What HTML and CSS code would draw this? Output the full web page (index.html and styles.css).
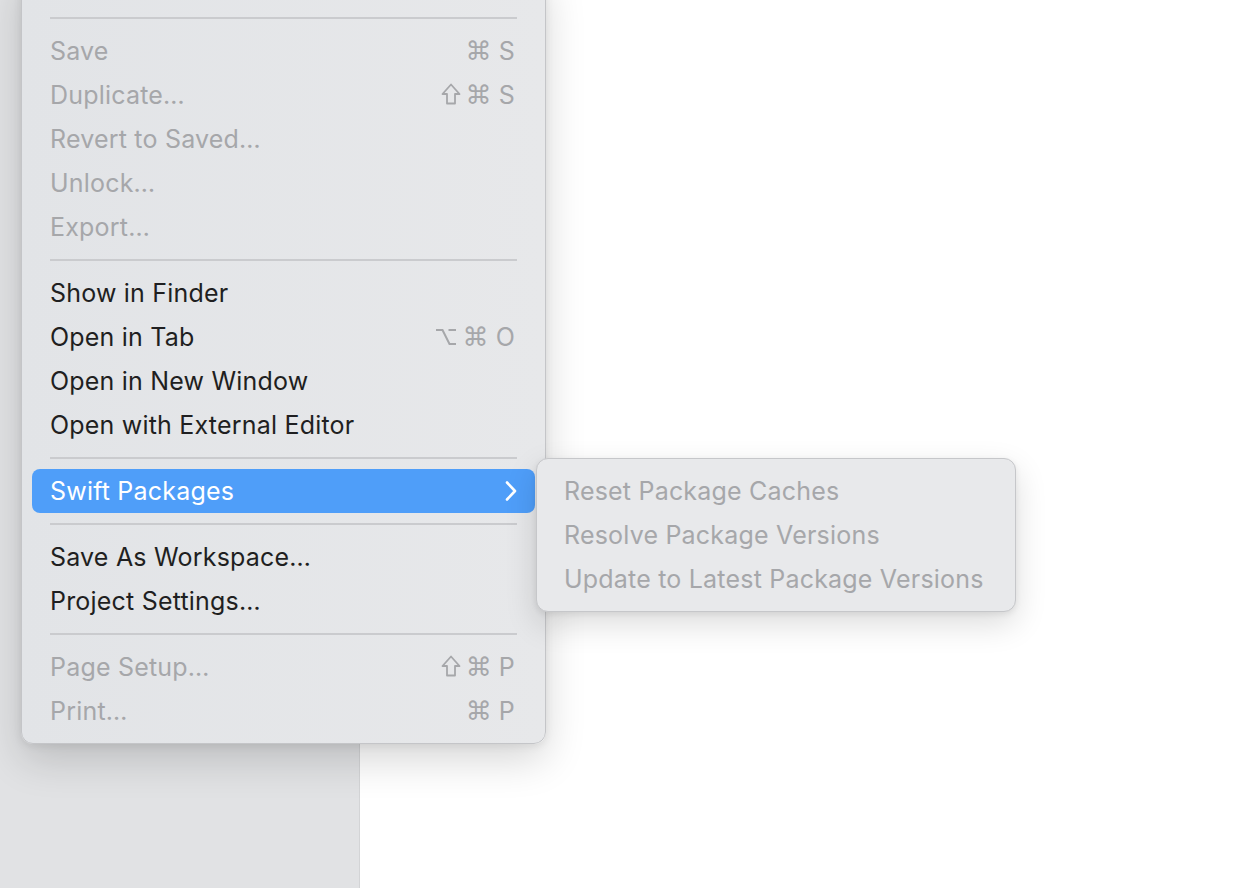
FILE: index.html
```html
<!DOCTYPE html>
<html lang="en">
<head>
    <meta charset="UTF-8">
    <title>File menu</title>
    <link rel="stylesheet" href="styles.css">
</head>
<body>
    <div class="window">
        <aside class="sidebar"></aside>
        <main class="editor"></main>
    </div>

    <div class="menu">
        <div class="sep"></div>
        <div class="item off"><span>Save</span><span class="keys"><i>⌘</i><b>S</b></span></div>
        <div class="item off"><span>Duplicate…</span>
            <span class="keys">
                <svg class="shift" width="20" height="22" viewBox="0 0 20 22"><path d="M10 1.5 L18.5 11 H14 V20.5 H6 V11 H1.5 Z" fill="none" stroke="#a6a7aa" stroke-width="1.8" stroke-linejoin="round"/></svg><i>⌘</i><b>S</b>
            </span>
        </div>
        <div class="item off"><span>Revert to Saved…</span></div>
        <div class="item off"><span>Unlock…</span></div>
        <div class="item off"><span>Export…</span></div>
        <div class="sep"></div>
        <div class="item"><span>Show in Finder</span></div>
        <div class="item"><span>Open in Tab</span>
            <span class="keys">
                <svg class="option" width="22" height="20" viewBox="0 0 22 20"><path d="M1 3 H7.5 L14.5 17 H21 M13.5 3 H21" fill="none" stroke="#a6a7aa" stroke-width="2"/></svg><i>⌘</i><b>O</b>
            </span>
        </div>
        <div class="item"><span>Open in New Window</span></div>
        <div class="item"><span>Open with External Editor</span></div>
        <div class="sep"></div>
        <div class="item active"><span>Swift Packages</span>
            <svg class="chevron" width="14" height="22" viewBox="0 0 14 22"><path d="M3 2.5 L11 11 L3 19.5" fill="none" stroke="#fff" stroke-width="2.6" stroke-linecap="round" stroke-linejoin="round"/></svg>
        </div>
        <div class="sep"></div>
        <div class="item"><span>Save As Workspace…</span></div>
        <div class="item"><span>Project Settings…</span></div>
        <div class="sep"></div>
        <div class="item off"><span>Page Setup…</span>
            <span class="keys">
                <svg class="shift" width="20" height="22" viewBox="0 0 20 22"><path d="M10 1.5 L18.5 11 H14 V20.5 H6 V11 H1.5 Z" fill="none" stroke="#a6a7aa" stroke-width="1.8" stroke-linejoin="round"/></svg><i>⌘</i><b>P</b>
            </span>
        </div>
        <div class="item off"><span>Print…</span><span class="keys"><i>⌘</i><b>P</b></span></div>
    </div>

    <div class="submenu">
        <div class="item off"><span>Reset Package Caches</span></div>
        <div class="item off"><span>Resolve Package Versions</span></div>
        <div class="item off"><span>Update to Latest Package Versions</span></div>
    </div>
</body>
</html>
```

FILE: styles.css
```css
body {
    margin: 0;
    padding: 0;
    font-family: Inter, 'Noto Sans', sans-serif;
    background: #fff;
    overflow: hidden;
}
.window {
    display: flex;
    height: 888px;
}
.sidebar {
    width: 359px;
    background: #e1e2e4;
    border-right: 1px solid #d3d4d6;
}
.editor {
    flex: 1;
    background: #fff;
}
.menu {
    position: absolute;
    left: 21px;
    top: -30px;
    width: 525px;
    padding: 36px 0 10px;
    background: linear-gradient(90deg, #e2e4e7, #e7e8ea);
    border: 1px solid #c4c5c8;
    border-radius: 12px;
    box-sizing: border-box;
    box-shadow: 0 16px 40px rgba(0, 0, 0, 0.16), 0 2px 8px rgba(0, 0, 0, 0.08);
}
.sep {
    height: 2px;
    margin: 10px 28px;
    background: #cacbce;
}
.item {
    display: flex;
    align-items: center;
    justify-content: space-between;
    height: 44px;
    margin: 0 10px;
    padding: 0 18px;
    border-radius: 8px;
    font-size: 25px;
    letter-spacing: 0.2px;
    color: #1f1f21;
}
.item.off {
    color: #a6a7aa;
}
.item.active {
    background: #4f9ef9;
    color: #fff;
}
.keys {
    display: flex;
    align-items: center;
    gap: 5px;
    margin-right: 2px;
    color: #a6a7aa;
}
.keys i {
    font-style: normal;
    font-family: 'DejaVu Sans', sans-serif;
    font-size: 26px;
    line-height: 1;
}
.keys b {
    font-weight: normal;
    font-size: 25px;
    margin-left: 2px;
}
.shift {
    margin-top: -2px;
}
.chevron {
    margin-right: -1px;
}
.submenu {
    position: absolute;
    left: 536px;
    top: 458px;
    width: 480px;
    padding: 10px 0;
    background: #e8e9eb;
    border: 1px solid #c6c7ca;
    border-radius: 12px;
    box-sizing: border-box;
    box-shadow: 0 12px 32px rgba(0, 0, 0, 0.14), 0 2px 6px rgba(0, 0, 0, 0.08);
}
.submenu .item {
    margin: 0;
    padding: 0 27px;
}
```
